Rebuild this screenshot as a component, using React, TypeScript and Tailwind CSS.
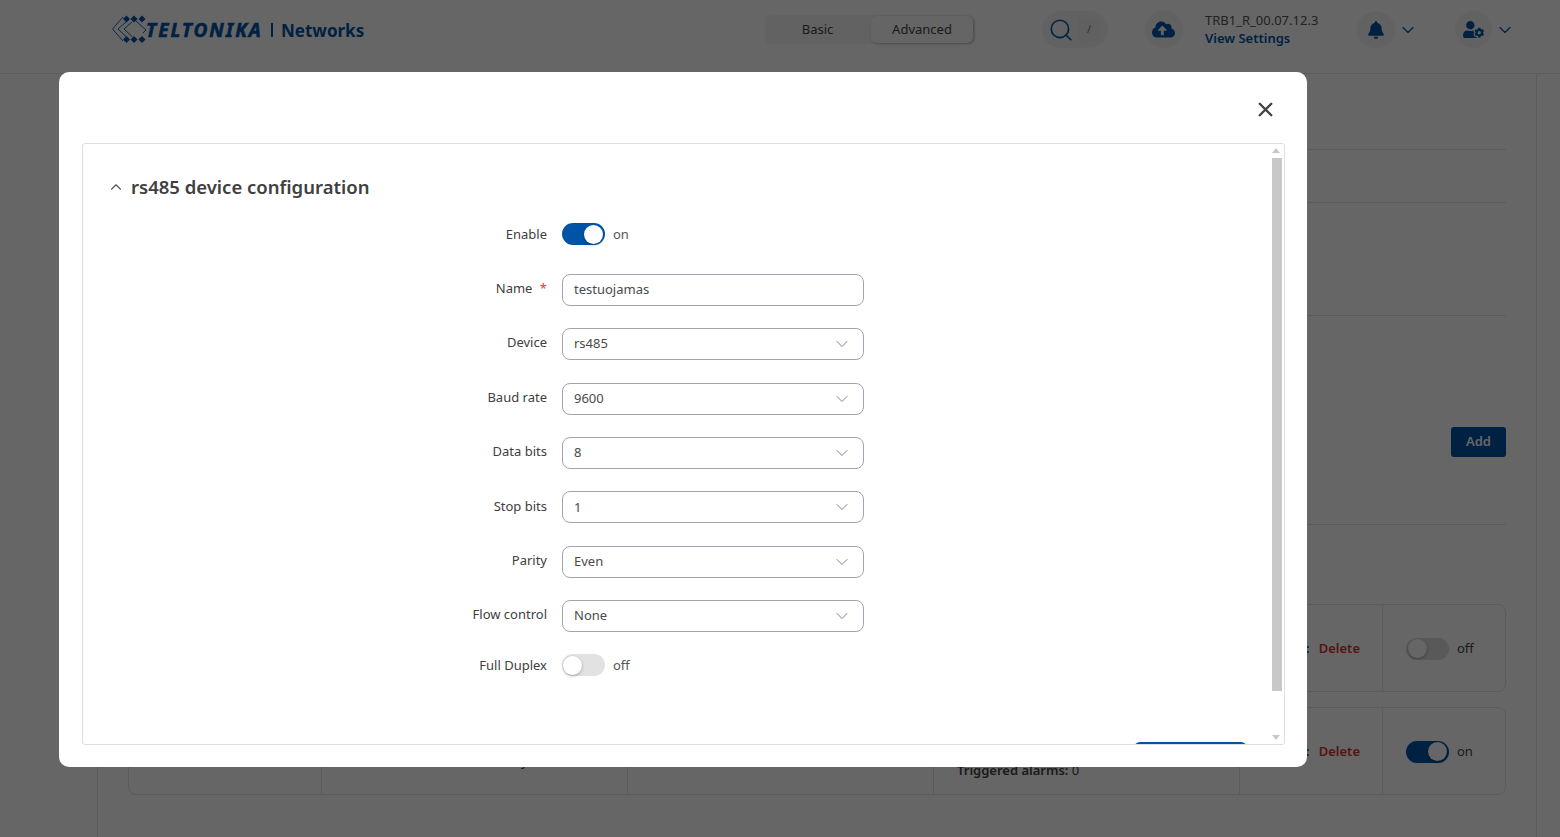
import { Search, ChevronDown, ChevronUp, X } from "lucide-react";
import { FaBell, FaCloudUploadAlt, FaUserCog } from "react-icons/fa";

const fields = [
  { label: "Device", value: "rs485" },
  { label: "Baud rate", value: "9600" },
  { label: "Data bits", value: "8" },
  { label: "Stop bits", value: "1" },
  { label: "Parity", value: "Even" },
  { label: "Flow control", value: "None" },
];

const Logo = () => (
  <div className="flex w-[251px] shrink-0 items-center">
    <svg width="38" height="32" viewBox="0 0 38 32" className="shrink-0 text-[#0054a6]">
      <g fill="currentColor">
        <path d="M14.5 1.5l3.5 3.5-3.5 3.5-3.5-3.5z" />
        <path d="M22 1.5l3.5 3.5-3.5 3.5-3.5-3.5z" />
        <path d="M30 1.5l3.5 3.5-3.5 3.5-3.5-3.5z" />
        <path d="M14.5 22l3.5 3.5-3.5 3.5-3.5-3.5z" />
        <path d="M22 22l3.5 3.5-3.5 3.5-3.5-3.5z" />
        <path d="M30 22l3.5 3.5-3.5 3.5-3.5-3.5z" />
      </g>
      <g fill="none" stroke="currentColor" strokeWidth="0.9">
        <path d="M11 3L0.5 15l10.5 12" />
        <path d="M14 8L6 15l8 7.5" />
        <path d="M20 8l-8 7 8 7.5" />
        <path d="M24 7l10 9-3 3" />
      </g>
    </svg>
    <span className="-ml-[4px] w-[116px] shrink-0 pt-[1px] font-['Liberation_Sans',sans-serif] text-[19px] leading-none font-bold tracking-[2.05px] text-[#0054a6] italic [-webkit-text-stroke:0.6px_#0054a6]">
      TELTONIKA
    </span>
    <span className="ml-[9px] h-[14px] w-[2px] shrink-0 bg-[#0054a6]" />
    <span className="ml-[8px] shrink-0 pt-[2px] font-['Liberation_Sans',sans-serif] text-[17px] leading-none font-bold text-[#0054a6]">
      Networks
    </span>
  </div>
);

const Header = () => (
  <header className="flex h-[74px] shrink-0 items-center border-b border-[#e6e6e6] bg-white pb-[14px] pl-[112px]">
    <Logo />
    <div className="ml-[402px] flex h-[29px] w-[210px] items-center rounded-[6px] bg-[#f5f5f5] text-[13px] text-[#444]">
      <span className="w-[105px] text-center">Basic</span>
      <span className="ml-[1px] flex h-[27px] w-[102px] items-center justify-center rounded-[6px] bg-[#fcfcfc] shadow-[1px_1px_3px_rgba(0,0,0,0.25)]">
        Advanced
      </span>
    </div>
    <div className="ml-[67px] flex h-[37px] w-[66px] items-center rounded-full bg-[#f5f5f5] pl-[6px]">
      <Search size={26} strokeWidth={1.5} className="text-[#0054a6]" />
      <span className="ml-[4px] flex h-[22px] w-[22px] items-center justify-center rounded-[3px] bg-[#f0f0f0] text-[11px] text-[#777]">/</span>
    </div>
    <div className="ml-[37px] flex h-[37px] w-[38px] items-center justify-center rounded-full bg-[#f5f5f5]">
      <FaCloudUploadAlt size={23} className="-ml-[1px] text-[#0054a6]" />
    </div>
    <div className="ml-[22px] w-[152px] pb-[2px] text-[13px] leading-[18px]">
      <div className="text-[#555]">TRB1_R_00.07.12.3</div>
      <div className="font-semibold text-[#0054a6]">View Settings</div>
    </div>
    <div className="flex h-[37px] w-[38px] items-center justify-center rounded-full bg-[#f5f5f5]">
      <FaBell size={18} className="text-[#0054a6]" />
    </div>
    <ChevronDown size={20} strokeWidth={1.4} className="ml-[3px] text-[#0054a6]" />
    <div className="ml-[37px] flex h-[37px] w-[37px] items-center justify-center rounded-full bg-[#f5f5f5]">
      <FaUserCog size={21} className="text-[#0054a6]" />
    </div>
    <ChevronDown size={20} strokeWidth={1.4} className="ml-[3px] text-[#0054a6]" />
  </header>
);

const TableRow = ({ on }: { on: boolean }) => (
  <div className="flex h-[88px] rounded-[8px] border border-[#e2e4e8] text-[13px] text-[#444]">
    <div className="w-[193px] border-r border-[#e2e4e8]" />
    <div className="w-[306px] border-r border-[#e2e4e8] pt-[44px] pl-[199px]">{on ? "y" : ""}</div>
    <div className="w-[306px] border-r border-[#e2e4e8]" />
    <div className="w-[306px] border-r border-[#e2e4e8] pt-[53px] pl-[23px]">
      {on && (
        <span>
          <b className="font-semibold">Triggered alarms:</b> 0
        </span>
      )}
    </div>
    <div className="flex w-[143px] items-center justify-end border-r border-[#e2e4e8] pt-[1px] pr-[22px]">
      <span className="mr-[9px] font-semibold text-[#0054a6]">:</span>
      <span className="font-semibold text-[#d9342b]">Delete</span>
    </div>
    <div className="flex flex-1 items-center pt-[1px] pl-[23px]">
      <Toggle on={on} dim />
      <span className="ml-[8px]">{on ? "on" : "off"}</span>
    </div>
  </div>
);

const Toggle = ({ on, dim }: { on: boolean; dim?: boolean }) => (
  <span
    className={
      on
        ? "flex h-[22px] w-[43px] items-center justify-end rounded-full bg-[#0054a6] pr-[2px]"
        : dim
          ? "flex h-[22px] w-[43px] items-center rounded-full bg-[#dedede] pl-[2px]"
          : "flex h-[22px] w-[43px] items-center rounded-full bg-[#e2e2e2] pl-[1px]"
    }
  >
    <span className="h-[19px] w-[19px] rounded-full bg-white shadow-[0_1px_3px_rgba(0,0,0,0.3)]" />
  </span>
);

const Page = () => (
  <main className="mr-[23px] ml-[97px] flex-1 border-x border-[#dfe3e8] px-[30px]">
    <div className="h-[76px] border-b border-[#e2e4e8]" />
    <div className="h-[53px] border-b border-[#e2e4e8]" />
    <div className="h-[113px] border-b border-[#e2e4e8]" />
    <div className="flex h-[209px] items-start justify-end border-b border-[#e2e4e8] pt-[111px]">
      <button className="h-[30px] w-[55px] rounded-[3px] bg-[#0054a6] text-[13px] font-semibold text-white">Add</button>
    </div>
    <div className="mt-[79px] flex flex-col gap-[15px]">
      <TableRow on={false} />
      <TableRow on />
    </div>
  </main>
);

const FormRow = ({ label, raised = true, children }: { label: React.ReactNode; raised?: boolean; children: React.ReactNode }) => (
  <div className="flex items-center">
    <div className={raised ? "w-[464px] pb-[2px] text-right text-[13px] text-[#404040]" : "w-[464px] pt-[1px] text-right text-[13px] text-[#404040]"}>{label}</div>
    <div className="ml-[15px]">{children}</div>
  </div>
);

const Modal = () => (
  <div className="absolute inset-0 bg-black/60">
    <div className="mt-[72px] ml-[59px] flex h-[695px] w-[1248px] flex-col rounded-[10px] bg-white pr-[22px] pl-[23px]">
      <div className="flex h-[71px] shrink-0 items-center justify-end pt-[3px] pr-[8px]">
        <X size={23} strokeWidth={2.5} className="text-[#444]" />
      </div>
      <div className="relative h-[602px] overflow-hidden rounded-[3px] border border-[#dedede]">
        <div className="flex items-center pt-[30px] pl-[24px]">
          <ChevronUp size={18} strokeWidth={1.5} className="text-[#555]" />
          <h2 className="ml-[6px] text-[18.5px] leading-[26px] font-semibold text-[#404040]">rs485 device configuration</h2>
        </div>
        <div className="mt-[23px] flex flex-col">
          <FormRow label="Enable" raised={false}>
            <div className="flex items-center text-[13px] text-[#555]">
              <Toggle on />
              <span className="ml-[8px] pt-[1px]">on</span>
            </div>
          </FormRow>
          <div className="mt-[28.75px] flex flex-col gap-[22.4px]">
            <FormRow
              label={
                <>
                  Name <span className="ml-[4px] text-[#e5383b]">*</span>
                </>
              }
            >
              <div className="flex h-[32px] w-[302px] items-center rounded-[8px] border border-[#a4a4b0] pl-[11px] text-[13px] text-[#4a4a4a]">
                testuojamas
              </div>
            </FormRow>
            {fields.map((f) => (
              <FormRow key={f.label} label={f.label}>
                <div className="flex h-[32px] w-[302px] items-center justify-between rounded-[8px] border border-[#a4a4b0] pr-[11px] pl-[11px] text-[13px] text-[#4a4a4a]">
                  {f.value}
                  <ChevronDown size={20} strokeWidth={1.1} className="text-[#777]" />
                </div>
              </FormRow>
            ))}
            <FormRow label="Full Duplex" raised={false}>
              <div className="flex items-center text-[13px] text-[#555]">
                <Toggle on={false} />
                <span className="ml-[8px]">off</span>
              </div>
            </FormRow>
          </div>
        </div>
        <div className="mt-[65.5px] flex justify-end pr-[37px]">
          <div className="h-[32px] w-[113px] rounded-[6px] bg-[#0054a6]" />
        </div>
        {/* scrollbar */}
        <div className="absolute top-[14px] right-[2px] h-[533px] w-[10px] bg-[#c8c8c8]" />
        <div className="absolute top-[4px] right-[4px] h-0 w-0 border-x-[4px] border-b-[5px] border-x-transparent border-b-[#c8c8c8]" />
        <div className="absolute right-[4px] bottom-[4px] h-0 w-0 border-x-[4px] border-t-[5px] border-x-transparent border-t-[#c8c8c8]" />
      </div>
    </div>
  </div>
);

export default function App() {
  return (
    <div className="relative flex h-screen flex-col overflow-hidden bg-white font-['Open_Sans',sans-serif]">
      <Header />
      <Page />
      <Modal />
    </div>
  );
}
